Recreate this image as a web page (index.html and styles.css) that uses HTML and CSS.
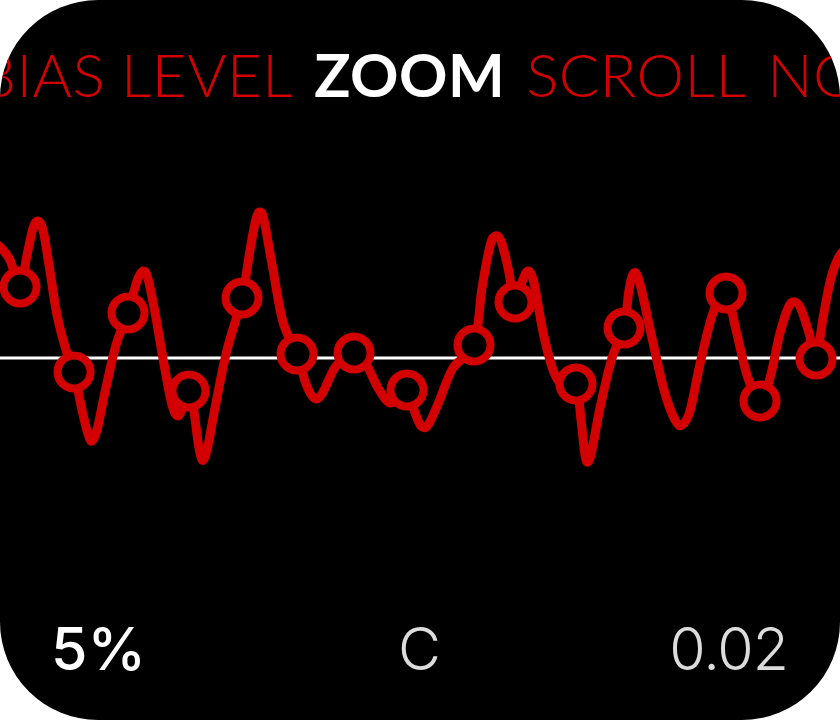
FILE: index.html
```html
<!DOCTYPE html>
<html lang="en">
<head>
<meta charset="utf-8">
<title>Zoom</title>
<link rel="stylesheet" href="styles.css">
</head>
<body>
<div class="watch">
  <div class="menu">
    <div class="menu-track">
      <span class="item first">BIAS</span>
      <span class="item">LEVEL</span>
      <span class="item active">ZOOM</span>
      <span class="item">SCROLL</span>
      <span class="item">NOISE</span>
    </div>
  </div>
  <svg class="chart" viewBox="0 150 840 469" width="840" height="469" xmlns="http://www.w3.org/2000/svg">
    <line class="axis" x1="0" y1="358" x2="840" y2="358"/>
    <path id="wave" class="wave" d="M0,247"/>
    <g class="samples">
      <circle cx="20" cy="287" r="16.5"/>
      <circle cx="74" cy="372" r="16.5"/>
      <circle cx="128" cy="313" r="16.5"/>
      <circle cx="189" cy="391" r="16.5"/>
      <circle cx="242" cy="298" r="16.5"/>
      <circle cx="297" cy="354" r="16.5"/>
      <circle cx="354" cy="353" r="16.5"/>
      <circle cx="407" cy="390" r="16.5"/>
      <circle cx="474" cy="345" r="16.5"/>
      <circle cx="515" cy="302" r="16.5"/>
      <circle cx="576" cy="384" r="16.5"/>
      <circle cx="624" cy="328" r="16.5"/>
      <circle cx="726" cy="293" r="16.5"/>
      <circle cx="760" cy="401" r="16.5"/>
      <circle cx="816" cy="359" r="16.5"/>
    </g>
  </svg>
  <div class="footer">
    <span class="val strong">5%</span>
    <span class="val mid">C</span>
    <span class="val end">0.02</span>
  </div>
</div>
<script src="script.js"></script>
</body>
</html>
```

FILE: styles.css
```css
html, body {
  margin: 0;
  padding: 0;
  background: #ffffff;
}

.watch {
  width: 840px;
  height: 720px;
  background: #000000;
  border-radius: 98px;
  overflow: hidden;
  display: flex;
  flex-direction: column;
}

.menu {
  height: 150px;
  padding-top: 44px;
  box-sizing: border-box;
  overflow: hidden;
  flex: none;
}

.menu-track {
  display: flex;
  gap: 21px;
  margin-left: -22px;
  white-space: nowrap;
  font-family: Lato, "Liberation Sans", sans-serif;
  font-size: 60px;
  line-height: 60px;
  font-weight: 300;
  letter-spacing: 0.5px;
  color: #d20000;
}

.item {
  flex: none;
}

.item.first {
  margin-right: -5px;
}

.item.active {
  color: #ffffff;
  font-weight: 700;
}

.chart {
  display: block;
  width: 840px;
  height: 469px;
  flex: none;
}

.axis {
  stroke: #ffffff;
  stroke-width: 3;
}

.wave {
  fill: none;
  stroke: #d20000;
  stroke-width: 9;
  stroke-linecap: round;
  stroke-linejoin: round;
}

.samples circle {
  fill: #000000;
  stroke: #d20000;
  stroke-width: 8;
}

.footer {
  display: grid;
  grid-template-columns: 1fr auto 1fr;
  padding: 0 52px 0 51px;
  font-family: Inter, "Liberation Sans", sans-serif;
  font-size: 59px;
  line-height: 59px;
  font-weight: 300;
  color: #dcdcdc;
}

.val.strong {
  justify-self: start;
  color: #ffffff;
  font-weight: 500;
}

.val.mid {
  justify-self: center;
}

.val.end {
  justify-self: end;
  letter-spacing: -1px;
}
```

FILE: script.js
```js
(function () {
  var pts = [
    [-12,238],[0,247],[10,260],[20,287],[27,255],[33,228],[38,221],[43,230],[49,265],[57,315],
    [66,350],[74,372],[82,410],[88,434],[92,441],[97,430],[105,392],[116,345],[128,313],[137,281],
    [143,271],[148,279],[156,318],[165,370],[172,405],[178,416],[184,404],[189,391],[194,412],[198,442],
    [202,460],[207,450],[215,408],[227,350],[242,298],[250,250],[256,219],[260,212],[264,220],[272,264],
    [283,322],[297,354],[306,384],[314,398],[322,394],[336,366],[354,353],[366,364],[378,388],[390,403],
    [400,394],[407,390],[414,410],[421,426],[428,425],[438,404],[453,368],[474,345],[482,288],[490,246],
    [495,236],[501,241],[508,268],[515,302],[522,282],[528,271],[534,283],[543,332],[553,370],[563,386],
    [576,384],[581,420],[585,455],[588,462],[592,450],[600,408],[612,358],[624,328],[629,290],[634,273],
    [640,284],[652,338],[664,390],[675,420],[682,425],[690,411],[700,364],[713,313],[726,293],[736,330],
    [747,375],[760,401],[770,378],[780,333],[789,306],[795,302],[801,309],[809,333],[816,359],[823,318],
    [831,278],[840,255],[850,246]
  ];
  function f(n) { return Math.round(n * 10) / 10; }
  var d = 'M' + pts[0][0] + ',' + pts[0][1];
  for (var i = 0; i < pts.length - 1; i++) {
    var p0 = pts[i - 1] || pts[i];
    var p1 = pts[i];
    var p2 = pts[i + 1];
    var p3 = pts[i + 2] || pts[i + 1];
    var c1x = p1[0] + (p2[0] - p0[0]) / 6;
    var c1y = p1[1] + (p2[1] - p0[1]) / 6;
    var c2x = p2[0] - (p3[0] - p1[0]) / 6;
    var c2y = p2[1] - (p3[1] - p1[1]) / 6;
    d += ' C' + f(c1x) + ',' + f(c1y) + ' ' + f(c2x) + ',' + f(c2y) + ' ' + p2[0] + ',' + p2[1];
  }
  document.getElementById('wave').setAttribute('d', d);
})();
```
